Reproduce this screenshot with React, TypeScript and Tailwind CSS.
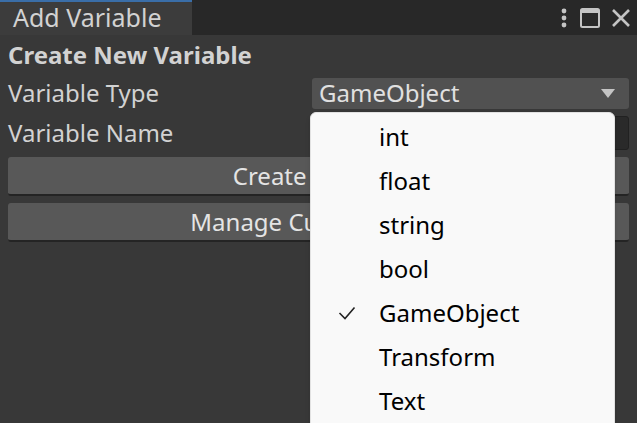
import React from "react";

const font = { fontFamily: '"Noto Sans", "Open Sans", sans-serif' };

export default function App() {
  const items = ["int", "float", "string", "bool", "GameObject", "Transform", "Text"];
  return (
    <div className="relative w-[637px] h-[423px] overflow-hidden bg-[#383838] text-[#d2d2d2]" style={font}>
      <div className="flex h-[35px] bg-[#282828]">
        <div className="w-[192px] bg-[#3c3c3c] border-t-2 border-[#3a6ea8] flex items-center pl-[13px] pb-[2px] text-[25px] leading-none text-[#d2d2d2]">
          Add Variable
        </div>
        <div className="flex-1" />
        <div className="flex items-center gap-[10px] pr-[6px]">
          <svg width="10" height="22" viewBox="0 0 10 22">
            <circle cx="5" cy="4" r="2.4" fill="#c4c4c4" />
            <circle cx="5" cy="11" r="2.4" fill="#c4c4c4" />
            <circle cx="5" cy="18" r="2.4" fill="#c4c4c4" />
          </svg>
          <svg width="22" height="22" viewBox="0 0 22 22">
            <rect x="2" y="2" width="18" height="18" rx="1.5" fill="none" stroke="#c4c4c4" strokeWidth="2" />
            <rect x="2" y="2" width="18" height="4" fill="#c4c4c4" />
          </svg>
          <svg width="20" height="20" viewBox="0 0 20 20">
            <path d="M2 2 L18 18 M18 2 L2 18" stroke="#c4c4c4" strokeWidth="2.6" />
          </svg>
        </div>
      </div>
      <div className="px-[8px] pt-[5px] flex flex-col">
        <div className="h-[30px] flex items-center text-[24px] font-bold leading-none">Create New Variable</div>
        <div className="flex items-center h-[38px] mt-[4px]">
          <div className="w-[304px] text-[24px] leading-none">Variable Type</div>
          <div className="flex-1 h-[31px] bg-[#515151] rounded-[3px] flex items-center pl-[7px] pr-[14px] text-[24px] leading-none text-[#e0e0e0]">
            <span className="flex-1">GameObject</span>
            <svg width="14" height="9" viewBox="0 0 14 9">
              <path d="M0 0 H14 L7 9 Z" fill="#c4c4c4" />
            </svg>
          </div>
        </div>
        <div className="flex items-center h-[34px] mt-[4px]">
          <div className="w-[304px] text-[24px] leading-none">Variable Name</div>
          <div className="flex-1 h-[34px] bg-[#2a2a2a] rounded-[3px] border border-[#212121]" />
        </div>
        <button className="mt-[7px] h-[39px] bg-[#585858] rounded-[3px] border-b-2 border-[#242424] text-[24px] leading-none text-[#e4e4e4]">
          Create Variable
        </button>
        <button className="mt-[7px] h-[39px] bg-[#585858] rounded-[3px] border-b-2 border-[#242424] text-[24px] leading-none text-[#e4e4e4]">
          Manage Custom Types
        </button>
      </div>
      <div className="absolute left-[310px] top-[112px] w-[305px] h-[330px] bg-[#f9f9f9] rounded-[6px] border border-[#e2e2e2] shadow-md pt-[2px]">
        {items.map((it) => (
          <div key={it} className="h-[44px] flex items-center text-[24px] leading-none text-black">
            <div className="w-[68px] flex justify-center pl-[3px]">
              {it === "GameObject" && (
                <svg width="18" height="14" viewBox="0 0 18 14">
                  <path d="M1.5 7 L7 12.5 L16.5 1.5" fill="none" stroke="#222" strokeWidth="1.6" />
                </svg>
              )}
            </div>
            <span>{it}</span>
          </div>
        ))}
      </div>
    </div>
  );
}
